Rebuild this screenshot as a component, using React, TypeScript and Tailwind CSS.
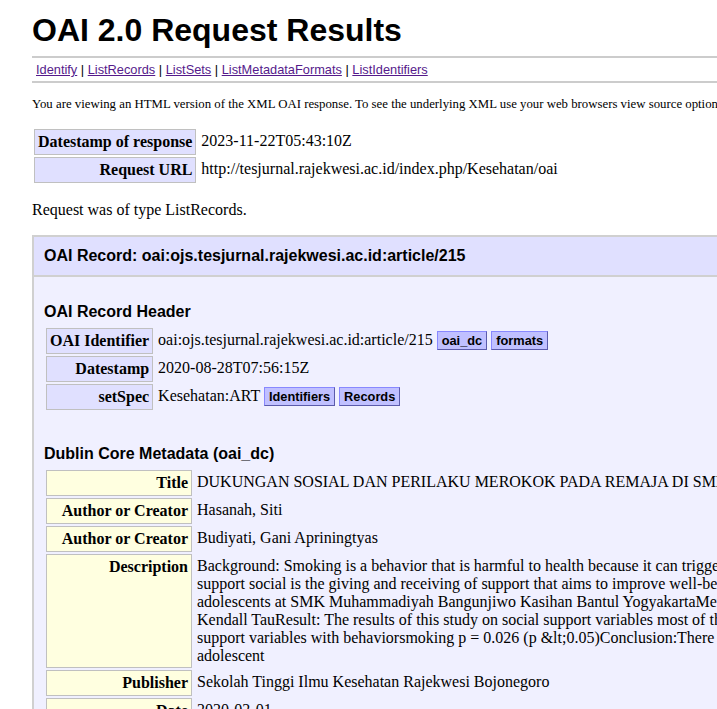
const sans = "font-['Liberation_Sans',Arial,sans-serif]";

type Row = { key: string; value: React.ReactNode };

function KeyCell({ children, dc }: { children: React.ReactNode; dc?: boolean }) {
  return (
    <td
      className={`${dc ? 'bg-[#ffffe0] w-[146px]' : 'bg-[#e0e0ff]'} border border-[#c0c0c0] p-[3px] text-right align-top font-bold whitespace-nowrap`}
    >
      {children}
    </td>
  );
}

function ValueCell({ children }: { children: React.ReactNode }) {
  return <td className="p-[3px] align-top whitespace-nowrap">{children}</td>;
}

function LinkButton({ children }: { children: React.ReactNode }) {
  return (
    <a
      href="#"
      className={`${sans} border border-[#88f] [border-style:outset] bg-[#c0c0ff] px-1 py-px text-[12.8px] font-bold text-black no-underline`}
    >
      {children}
    </a>
  );
}

function ValuesTable({ rows, dc }: { rows: Row[]; dc?: boolean }) {
  return (
    <table className="border-separate border-spacing-[2px] leading-[18px]">
      <tbody>
        {rows.map((r, i) => (
          <tr key={i}>
            <KeyCell dc={dc}>{r.key}</KeyCell>
            <ValueCell>{r.value}</ValueCell>
          </tr>
        ))}
      </tbody>
    </table>
  );
}

const quicklinks = ['Identify', 'ListRecords', 'ListSets', 'ListMetadataFormats', 'ListIdentifiers'];

const description = [
  'Background: Smoking is a behavior that is harmful to health because it can trigger various diseases and even death. One factor that influences smoking behavior is social support,',
  'support social is the giving and receiving of support that aims to improve well-being. Objective: To determine the relationship between social support and smoking behavior in',
  'adolescents at SMK Muhammadiyah Bangunjiwo Kasihan Bantul YogyakartaMethod: This study used a correlational design with a cross sectional approach, analyzed using',
  'Kendall TauResult: The results of this study on social support variables most of them were in the moderate category, the results of the analysis of the relationship of social',
  'support variables with behaviorsmoking p = 0.026 (p &lt;0.05)Conclusion:There is a relationship between social support and smoking behavior in',
  'adolescent',
];

export default function App() {
  const headerRows: Row[] = [
    {
      key: 'OAI Identifier',
      value: (
        <>
          oai:ojs.tesjurnal.rajekwesi.ac.id:article/215 <LinkButton>oai_dc</LinkButton>{' '}
          <LinkButton>formats</LinkButton>
        </>
      ),
    },
    { key: 'Datestamp', value: '2020-08-28T07:56:15Z' },
    {
      key: 'setSpec',
      value: (
        <>
          Kesehatan:ART <LinkButton>Identifiers</LinkButton> <LinkButton>Records</LinkButton>
        </>
      ),
    },
  ];

  const dcRows: Row[] = [
    {
      key: 'Title',
      value: 'DUKUNGAN SOSIAL DAN PERILAKU MEROKOK PADA REMAJA DI SMK MUHAMMADIYAH BANGUNJIWO KASIHAN BANTUL YOGYAKARTA',
    },
    { key: 'Author or Creator', value: 'Hasanah, Siti' },
    { key: 'Author or Creator', value: 'Budiyati, Gani Apriningtyas' },
    {
      key: 'Description',
      value: description.map((line, i) => (
        <span key={i} className="block">
          {line}
        </span>
      )),
    },
    { key: 'Publisher', value: 'Sekolah Tinggi Ilmu Kesehatan Rajekwesi Bojonegoro' },
    { key: 'Date', value: '2020-02-01' },
    { key: 'Type', value: 'info:eu-repo/semantics/article' },
  ];

  return (
    <div className="w-[717px] h-[709px] overflow-hidden bg-white text-black">
      <div className="w-[1400px] px-8 pt-3 font-['Liberation_Serif','Times_New_Roman',serif] text-base">
        {/* Title */}
        <h1 className={`${sans} text-[32px] font-bold leading-[normal] pb-1`}>OAI 2.0 Request Results</h1>

        {/* Quick links */}
        <ul className={`${sans} mt-[3px] border-y-2 border-[#ccc] p-1 text-[12.8px] leading-[normal]`}>
          {quicklinks.map((q, i) => (
            <li key={q} className="inline">
              <a href="#" className="text-[#551a8b] underline">
                {q}
              </a>
              {i < quicklinks.length - 1 ? ' | ' : ''}
            </li>
          ))}
        </ul>

        <p className="mt-[14px] text-[12.8px] leading-[normal]">
          You are viewing an HTML version of the XML OAI response. To see the underlying XML use your web browsers view
          source option for more information about this XSLT see the bottom of this page.
        </p>

        <div className="mt-[15px]">
          <ValuesTable
            rows={[
              { key: 'Datestamp of response', value: '2023-11-22T05:43:10Z' },
              { key: 'Request URL', value: 'http://tesjurnal.rajekwesi.ac.id/index.php/Kesehatan/oai' },
            ]}
          />
        </div>

        <p className="mt-4 leading-[normal]">Request was of type ListRecords.</p>

        {/* Record */}
        <div className="mt-4">
          <h2
            className={`${sans} border-x-2 border-t-2 border-[#d0d0d0] bg-[#e0e0ff] p-[10px] text-base font-bold leading-[normal]`}
          >
            OAI Record: oai:ojs.tesjurnal.rajekwesi.ac.id:article/215
          </h2>
          <div className="border-2 border-[#d0d0d0] bg-[#f0f0ff] p-[10px]">
            <h3 className={`${sans} mt-4 mb-[4.8px] text-base font-bold leading-[normal]`}>OAI Record Header</h3>
            <ValuesTable rows={headerRows} />

            <h3 className={`${sans} mt-[33px] mb-[4.8px] text-base font-bold leading-[normal]`}>
              Dublin Core Metadata (oai_dc)
            </h3>
            <ValuesTable rows={dcRows} dc />
          </div>
        </div>
      </div>
    </div>
  );
}
